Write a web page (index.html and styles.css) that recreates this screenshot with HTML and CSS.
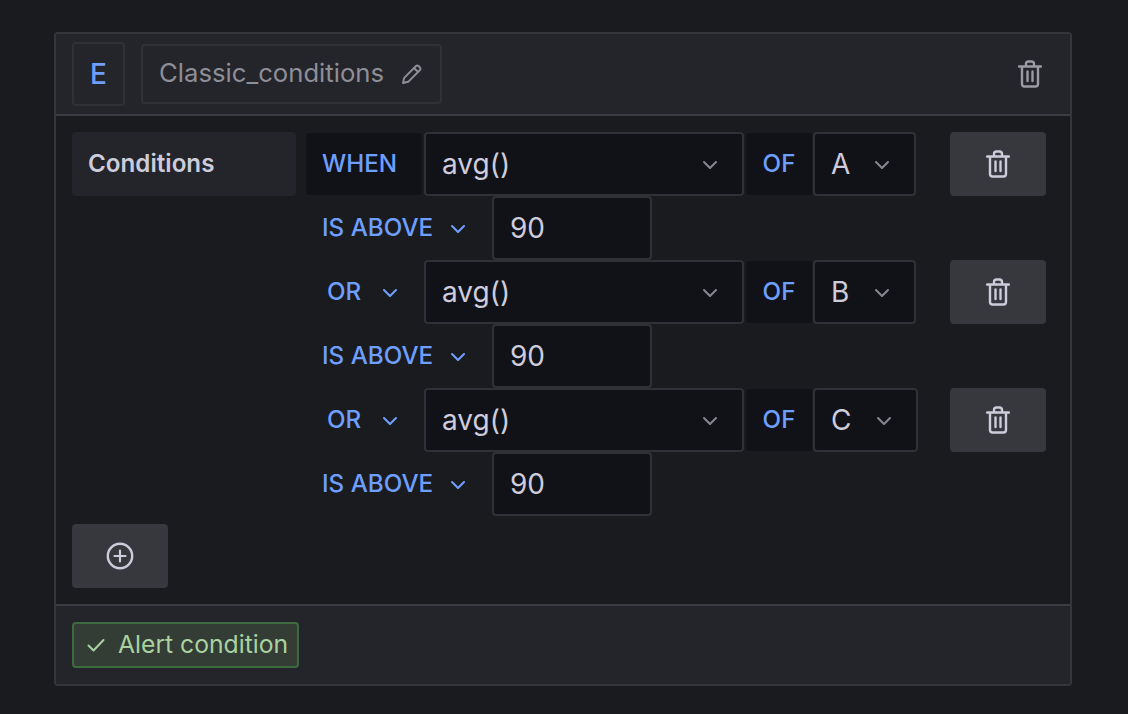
FILE: index.html
```html
<!DOCTYPE html>
<html lang="en">
<head>
<meta charset="utf-8">
<title>Classic conditions</title>
<link rel="stylesheet" href="styles.css">
</head>
<body>
<svg class="defs" width="0" height="0" aria-hidden="true">
  <symbol id="chev" viewBox="0 0 16 16"><path d="M2 5 L8 11 L14 5" fill="none" stroke="currentColor" stroke-width="2.1" stroke-linecap="round" stroke-linejoin="round"/></symbol>
  <symbol id="trash" viewBox="0 0 24 28"><path d="M1 6.5 H23 M4 6.5 V24 Q4 26.5 6.5 26.5 H17.5 Q20 26.5 20 24 V6.5 M8 6.5 V4 Q8 1.5 10.5 1.5 H13.5 Q16 1.5 16 4 V6.5 M9.5 11.5 V21 M14.5 11.5 V21" fill="none" stroke="currentColor" stroke-width="2.4" stroke-linecap="round" stroke-linejoin="round"/></symbol>
</svg>
<main class="card">
  <header class="card-head">
    <div class="ref-id">E</div>
    <div class="name-box">
      <span class="name">Classic_conditions</span>
      <svg class="pencil" viewBox="0 0 22 22"><path d="M2 20 L3.2 14.8 L15 3 Q16.2 1.8 17.5 3 L19 4.5 Q20.2 5.8 19 7 L7.2 18.8 Z M13 5 L17 9" fill="none" stroke="currentColor" stroke-width="1.9" stroke-linejoin="round" stroke-linecap="round"/></svg>
    </div>
    <svg class="head-trash"><use href="#trash"/></svg>
  </header>
  <section class="card-body">
    <div class="top">
      <div class="label"><span>Conditions</span></div>
      <div class="rows">
        <div class="row">
          <div class="tag when"><span>WHEN</span></div>
          <div class="select fn"><span>avg()</span><svg class="chev"><use href="#chev"/></svg></div>
          <div class="tag of"><span>OF</span></div>
          <div class="select query"><span>A</span><svg class="chev"><use href="#chev"/></svg></div>
          <button class="btn del"><svg class="btn-trash"><use href="#trash"/></svg></button>
        </div>
        <div class="row">
          <div class="op above"><span>IS ABOVE</span><svg class="chev"><use href="#chev"/></svg></div>
          <div class="value"><span>90</span></div>
        </div>
        <div class="row">
          <div class="op or"><span>OR</span><svg class="chev"><use href="#chev"/></svg></div>
          <div class="select fn"><span>avg()</span><svg class="chev"><use href="#chev"/></svg></div>
          <div class="tag of"><span>OF</span></div>
          <div class="select query"><span>B</span><svg class="chev"><use href="#chev"/></svg></div>
          <button class="btn del"><svg class="btn-trash"><use href="#trash"/></svg></button>
        </div>
        <div class="row">
          <div class="op above"><span>IS ABOVE</span><svg class="chev"><use href="#chev"/></svg></div>
          <div class="value"><span>90</span></div>
        </div>
        <div class="row">
          <div class="op or"><span>OR</span><svg class="chev"><use href="#chev"/></svg></div>
          <div class="select fn"><span>avg()</span><svg class="chev"><use href="#chev"/></svg></div>
          <div class="tag of"><span>OF</span></div>
          <div class="select query wide"><span>C</span><svg class="chev"><use href="#chev"/></svg></div>
          <button class="btn del"><svg class="btn-trash"><use href="#trash"/></svg></button>
        </div>
        <div class="row">
          <div class="op above"><span>IS ABOVE</span><svg class="chev"><use href="#chev"/></svg></div>
          <div class="value"><span>90</span></div>
        </div>
      </div>
    </div>
    <button class="btn add">
      <svg class="plus" viewBox="0 0 28 28"><circle cx="14" cy="14" r="12.2" fill="none" stroke="currentColor" stroke-width="2.4"/><path d="M14 8.5 V19.5 M8.5 14 H19.5" fill="none" stroke="currentColor" stroke-width="2.2" stroke-linecap="round"/></svg>
    </button>
  </section>
  <footer class="card-foot">
    <div class="badge">
      <svg class="check" viewBox="0 0 18 14"><path d="M1.5 7.5 L6.5 12.5 L16.5 2" fill="none" stroke="currentColor" stroke-width="2" stroke-linecap="round" stroke-linejoin="round"/></svg>
      <span>Alert condition</span>
    </div>
  </footer>
</main>
</body>
</html>
```
FILE: styles.css
```css
* { box-sizing: border-box; }
html, body { margin: 0; height: 100%; }
body {
  background: #1a1b1f;
  font-family: Inter, "Liberation Sans", sans-serif;
  font-size: 28px;
  color: #ccccdc;
  padding: 32px 56px 0 54px;
  overflow: hidden;
}
.defs { position: absolute; }
.card {
  width: 1018px;
  height: 654px;
  border: 2px solid #35363b;
  border-radius: 4px;
  display: flex;
  flex-direction: column;
}
.card-head {
  height: 82px;
  flex: none;
  background: #24252a;
  border-bottom: 2px solid #3c3d43;
  padding: 8px 28px 0 16px;
  display: flex;
  align-items: flex-start;
}
.ref-id {
  width: 53px;
  height: 64px;
  border: 2px solid #303136;
  border-radius: 4px;
  color: #6e9fff;
  font-weight: 500;
  display: flex;
  align-items: center;
  justify-content: center;
}
.name-box {
  margin: 2px 0 0 16px;
  width: 301px;
  height: 60px;
  border: 2px solid #303136;
  border-radius: 4px;
  color: #8e8e98;
  font-size: 25.7px;
  padding: 0 17px 0 16px;
  display: flex;
  align-items: center;
  justify-content: space-between;
}
.name { margin-bottom: 4px; }
.pencil { width: 22px; height: 22px; color: #8e8e98; }
.head-trash { width: 24px; height: 28px; margin: 18px 0 0 auto; color: #9a9ba3; }
.card-body {
  flex: 1;
  background: #1a1b1f;
  padding: 16px 16px 0;
}
.top { display: flex; }
.label {
  width: 224px;
  height: 64px;
  background: #24252a;
  border-radius: 4px;
  font-weight: 600;
  font-size: 24.2px;
  padding-left: 16px;
  display: flex;
  align-items: center;
}
.rows { margin-left: 10px; width: 740px; }
.row { height: 64px; display: flex; align-items: stretch; }
.tag span, .op span, .label span { margin-bottom: 2px; }
.tag {
  background: #111217;
  border-radius: 4px;
  color: #6e9fff;
  font-weight: 500;
  font-size: 24.2px;
  display: flex;
  align-items: center;
  margin: 1px 0;
}
.when { width: 116px; padding-left: 16px; margin-right: 2px; }
.of { width: 66px; justify-content: center; margin: 1px 1px 1px 2px; }
.select {
  background: #111217;
  border: 2px solid #303136;
  border-radius: 4px;
  display: flex;
  align-items: center;
  justify-content: space-between;
}
.fn { width: 320px; padding: 0 24px 0 16px; }
.query { width: 103px; padding: 0 24px 0 16px; }
.query.wide { width: 105px; }
.chev { width: 16px; height: 16px; margin-top: 2px; color: #85868d; flex: none; }
.btn {
  border: 0;
  border-radius: 4px;
  background: #37383e;
  color: #ccccdc;
  display: flex;
  align-items: center;
  justify-content: center;
  padding: 0;
}
.del { width: 96px; margin-left: auto; }
.btn-trash { width: 24px; height: 28px; }
.op {
  color: #6e9fff;
  font-weight: 500;
  font-size: 24.2px;
  display: flex;
  align-items: center;
}
.op .chev { color: #6e9fff; }
.above { width: 186px; padding-left: 16px; gap: 17px; }
.or { width: 118px; padding-left: 21px; gap: 21px; }
.value {
  width: 160px;
  background: #111217;
  border: 2px solid #303136;
  border-radius: 4px;
  padding-left: 16px;
  display: flex;
  align-items: center;
}
.add { width: 96px; height: 64px; margin-top: 8px; }
.plus { width: 28px; height: 28px; }
.card-foot {
  height: 80px;
  flex: none;
  background: #24252a;
  border-top: 2px solid #3c3d43;
  padding: 16px;
}
.badge {
  width: 227px;
  height: 46px;
  background: #333d35;
  border: 2px solid #3e6a3f;
  border-radius: 4px;
  color: #a9d2a0;
  font-size: 24.7px;
  padding-left: 13px;
  display: flex;
  align-items: center;
  gap: 13px;
}
.badge span { margin-bottom: 2px; }
.check { width: 18px; height: 14px; }
```
